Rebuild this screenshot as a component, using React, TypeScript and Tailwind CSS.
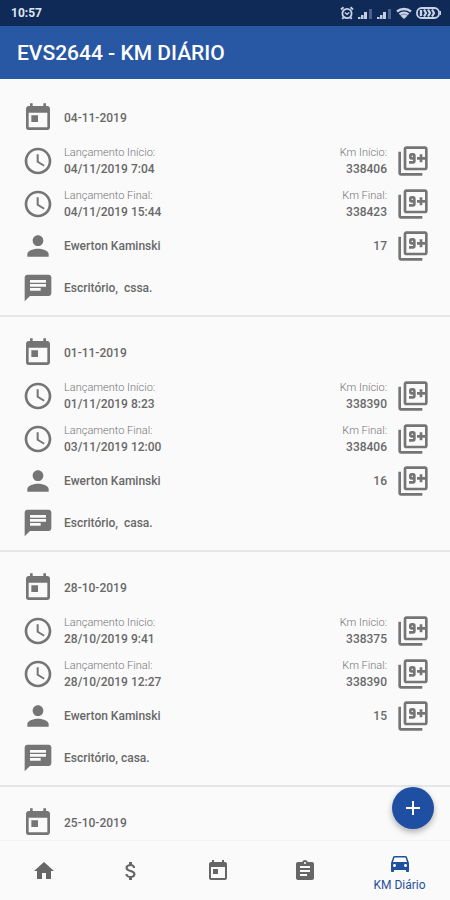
import React from "react";
import {
  MdAdd,
  MdAssignment,
  MdAttachMoney,
  MdChat,
  MdDirectionsCar,
  MdFilter9Plus,
  MdHome,
  MdPerson,
  MdSchedule,
  MdToday,
} from "react-icons/md";
import type { IconType } from "react-icons";

type Entry = {
  date: string;
  start: string;
  end: string;
  kmStart: string;
  kmEnd: string;
  total: string;
  driver: string;
  note: string;
};

const entries: Entry[] = [
  {
    date: "04-11-2019",
    start: "04/11/2019 7:04",
    end: "04/11/2019 15:44",
    kmStart: "338406",
    kmEnd: "338423",
    total: "17",
    driver: "Ewerton Kaminski",
    note: "Escritório,  cssa.",
  },
  {
    date: "01-11-2019",
    start: "01/11/2019 8:23",
    end: "03/11/2019 12:00",
    kmStart: "338390",
    kmEnd: "338406",
    total: "16",
    driver: "Ewerton Kaminski",
    note: "Escritório,  casa.",
  },
  {
    date: "28-10-2019",
    start: "28/10/2019 9:41",
    end: "28/10/2019 12:27",
    kmStart: "338375",
    kmEnd: "338390",
    total: "15",
    driver: "Ewerton Kaminski",
    note: "Escritório, casa.",
  },
];

function Signal() {
  return (
    <svg viewBox="0 0 15 11" className="h-[11px] w-[15px]" aria-hidden="true">
      <path d="M0 11V9h2.500v2zM3 11V7h2.500v4zM6 11V4h3v7z" fill="#c5cfe4" />
      <path d="M11 11V1h3v10z" fill="#4a618e" />
    </svg>
  );
}

function StatusBar() {
  return (
    <div className="flex h-[26px] shrink-0 items-center justify-between bg-[#0f2a56] pr-[9px] pl-[11px] text-[#dfe5f1]">
      <span className="text-xs leading-4 font-bold">10:57</span>
      <div className="flex items-center gap-1">
        <svg viewBox="0 0 14 14" className="h-[14px] w-[14px]" fill="none" stroke="#c9d3e6" aria-hidden="true">
          <circle cx="7" cy="7.5" r="4.6" strokeWidth="1.8" />
          <path d="M1 3.5 3.5 1.3M13 3.5 10.500 1.3M3.600 11.300 2.300 13M10.400 11.300 11.700 13" strokeWidth="1.8" />
          <path d="M4.800 6.500 7 8.300 9.300 6.500" strokeWidth="1.300" />
        </svg>
        <Signal />
        <Signal />
        <svg viewBox="0 0 16 12" className="h-3 w-4" fill="#c9d3e6" aria-hidden="true">
          <path d="M8 12 4.500 8.800a5 5 0 0 1 7 0z" />
          <path d="M1 4.500a11 11 0 0 1 14 0M3.500 7.300a7 7 0 0 1 9 0" fill="none" stroke="#c9d3e6" strokeWidth="2.400" />
        </svg>
        <svg viewBox="0 0 25 12" className="h-3 w-[25px]" fill="none" stroke="#c9d3e6" aria-hidden="true">
          <rect x="1" y="1" width="22" height="10" rx="4.500" strokeWidth="1.800" />
          <path d="M24.300 4v4" strokeWidth="1.400" />
          <path d="M5 3v6" strokeWidth="2.400" />
          <path d="m8 2.500 2 3.500-2 3.500M12 2.500l2 3.500-2 3.500M16 2.500l2 3.500-2 3.500" strokeWidth="2.200" />
        </svg>
      </div>
    </div>
  );
}

function Field({ label, value, right }: { label: string; value: string; right?: boolean }) {
  return (
    <div className={right ? "text-right" : "flex-1"}>
      <div className="text-[11px] leading-4 font-light text-[#757575]">{label}</div>
      <div className="text-xs leading-4 font-medium text-[#686868]">{value}</div>
    </div>
  );
}

function Plain({ children, right }: { children: string; right?: boolean }) {
  return (
    <div
      className={
        right
          ? "text-right text-xs font-medium text-[#686868]"
          : "flex-1 text-xs font-medium whitespace-pre text-[#686868]"
      }
    >
      {children}
    </div>
  );
}

function Lead({ icon: Icon }: { icon: IconType }) {
  return <Icon className="mr-[10px] size-8 shrink-0 text-[#757575]" aria-hidden="true" />;
}

function Counter() {
  return <MdFilter9Plus className="ml-[10px] size-8 shrink-0 text-[#757575]" aria-hidden="true" />;
}

function DateRow({ date }: { date: string }) {
  return (
    <div className="flex h-[42px] items-center">
      <Lead icon={MdToday} />
      <Plain>{date}</Plain>
    </div>
  );
}

function EntryItem({ entry }: { entry: Entry }) {
  return (
    <li className="border-b-2 border-[#e6e6e6] pt-[15px] pr-[21px] pb-[6px] pl-[22px]">
      <DateRow date={entry.date} />
      <div className="flex h-[43px] items-center">
        <Lead icon={MdSchedule} />
        <Field label="Lançamento Início:" value={entry.start} />
        <Field label="Km Início:" value={entry.kmStart} right />
        <Counter />
      </div>
      <div className="flex h-[43px] items-center">
        <Lead icon={MdSchedule} />
        <Field label="Lançamento Final:" value={entry.end} />
        <Field label="Km Final:" value={entry.kmEnd} right />
        <Counter />
      </div>
      <div className="flex h-[42px] items-center">
        <Lead icon={MdPerson} />
        <Plain>{entry.driver}</Plain>
        <Plain right>{entry.total}</Plain>
        <Counter />
      </div>
      <div className="flex h-[42px] items-center">
        <Lead icon={MdChat} />
        <Plain>{entry.note}</Plain>
      </div>
    </li>
  );
}

const tabs: { label: string; icon: IconType }[] = [
  { label: "Início", icon: MdHome },
  { label: "Despesas", icon: MdAttachMoney },
  { label: "Agenda", icon: MdToday },
  { label: "Tarefas", icon: MdAssignment },
];

export default function App() {
  return (
    <div className="relative flex h-screen flex-col overflow-hidden bg-[#fafafa] font-[Roboto,sans-serif]">
      <StatusBar />
      <header className="flex h-[53px] shrink-0 items-center bg-[#2857a4] px-[17px]">
        <h1 className="text-[21px] leading-7 font-medium text-white">EVS2644 - KM DIÁRIO</h1>
      </header>
      <main className="min-h-0 flex-1 overflow-hidden pt-[3px]">
        <ul>
          {entries.map((entry) => (
            <EntryItem key={entry.date} entry={entry} />
          ))}
          <li className="pt-[15px] pr-[21px] pl-[22px]">
            <DateRow date="25-10-2019" />
          </li>
        </ul>
      </main>
      <nav className="flex h-[60px] shrink-0 border-t border-[#f3f3f3] bg-[#fafafa]">
        {tabs.map(({ label, icon: Icon }) => (
          <button key={label} aria-label={label} className="flex flex-1 items-center justify-center text-[#666666]">
            <Icon className="size-6" aria-hidden="true" />
          </button>
        ))}
        <button className="flex w-[101px] flex-col items-center pt-[10px] text-[#1f4fa0]">
          <MdDirectionsCar className="size-6" aria-hidden="true" />
          <span className="mt-[2px] text-xs leading-4">KM Diário</span>
        </button>
      </nav>
      <button
        aria-label="Adicionar"
        className="absolute right-[16px] bottom-[71px] flex size-[42px] items-center justify-center rounded-full bg-[#1f4fa3] text-white shadow-[0_3px_6px_rgba(0,0,0,0.3)]"
      >
        <MdAdd className="size-6" aria-hidden="true" />
      </button>
    </div>
  );
}
